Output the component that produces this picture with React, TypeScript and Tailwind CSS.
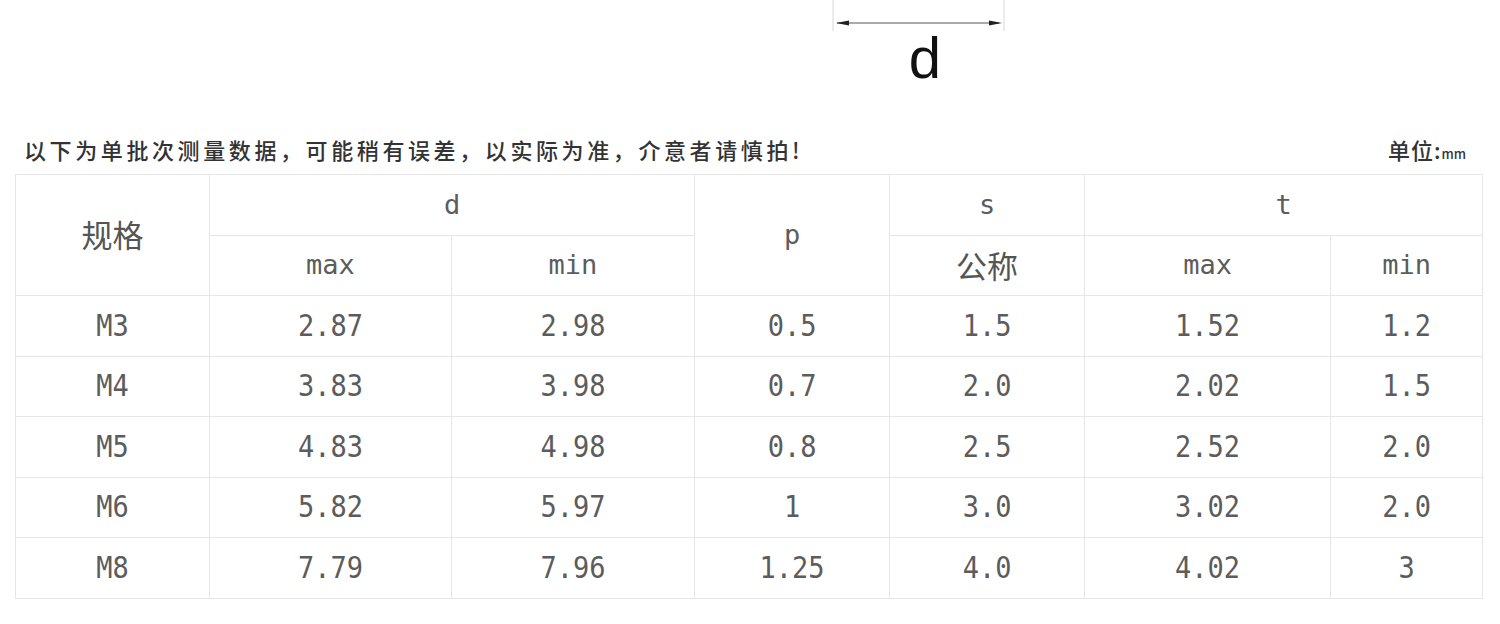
const rows = [
  ["M3", "2.87", "2.98", "0.5", "1.5", "1.52", "1.2"],
  ["M4", "3.83", "3.98", "0.7", "2.0", "2.02", "1.5"],
  ["M5", "4.83", "4.98", "0.8", "2.5", "2.52", "2.0"],
  ["M6", "5.82", "5.97", "1", "3.0", "3.02", "2.0"],
  ["M8", "7.79", "7.96", "1.25", "4.0", "4.02", "3"],
]

const mono = "font-['DejaVu_Sans_Mono',monospace] text-[27px] text-[#5c5c5c]"
const cjk = "font-['Noto_Sans_CJK_SC',sans-serif]"
const cell = "border border-[#e6e6e6] text-center align-middle p-0"

function Val({ v }: { v: string }) {
  return <span className="inline-block scale-y-[1.12]">{v}</span>
}

export default function App() {
  return (
    <div className="w-[1500px] h-[624px] bg-white overflow-hidden text-[#555]">
      {/* dimension drawing */}
      <div className="ml-[831px] w-[176px] flex flex-col items-center">
        <svg width="176" height="32" viewBox="0 0 176 32">
          <line x1="2" y1="0" x2="2" y2="31" stroke="#d8d8d8" strokeWidth="1" />
          <line x1="173" y1="0" x2="173" y2="31" stroke="#d8d8d8" strokeWidth="1" />
          <line x1="6" y1="23" x2="168" y2="23" stroke="#555" strokeWidth="1" />
          <path d="M5 23 L18 20.5 L18 25.5 Z" fill="#222" />
          <path d="M171 23 L158 20.5 L158 25.5 Z" fill="#222" />
        </svg>
        <div className="ml-[12px] -mt-[4px] font-['Liberation_Sans',sans-serif] text-[58px] leading-[60px] text-[#111]">d</div>
      </div>

      {/* note line */}
      <div className={`mt-[46px] flex items-center justify-between pl-[24px] pr-[34px] h-[30px] ${cjk} font-medium text-[#333]`}>
        <span className="text-[22px] tracking-[3.6px]">以下为单批次测量数据，可能稍有误差，以实际为准，介意者请慎拍!</span>
        <span className="text-[22px] tracking-[1px]">
          单位:<span className="text-[13px] tracking-normal">mm</span>
        </span>
      </div>

      <table className="ml-[15px] mt-[10px] w-[1467px] border-collapse table-fixed">
        <colgroup>
          <col className="w-[194px]" />
          <col className="w-[242px]" />
          <col className="w-[243px]" />
          <col className="w-[195px]" />
          <col className="w-[195px]" />
          <col className="w-[246px]" />
          <col className="w-[152px]" />
        </colgroup>
        <tbody>
          <tr className="h-[61px]">
            <td rowSpan={2} className={`${cell} ${cjk} text-[31px] pb-[2px]`}>规格</td>
            <td colSpan={2} className={`${cell} ${mono}`}>d</td>
            <td rowSpan={2} className={`${cell} ${mono}`}>p</td>
            <td className={`${cell} ${mono}`}>s</td>
            <td colSpan={2} className={`${cell} ${mono}`}>t</td>
          </tr>
          <tr className="h-[60px]">
            <td className={`${cell} ${mono}`}>max</td>
            <td className={`${cell} ${mono}`}>min</td>
            <td className={`${cell} ${cjk} text-[31px]`}>公称</td>
            <td className={`${cell} ${mono}`}>max</td>
            <td className={`${cell} ${mono}`}>min</td>
          </tr>
          {rows.map((r, i) => (
            <tr key={r[0]} className={i % 2 === 0 ? "h-[61px]" : "h-[60px]"}>
              {r.map((v, j) => (
                <td key={j} className={`${cell} ${mono}`}><Val v={v} /></td>
              ))}
            </tr>
          ))}
        </tbody>
      </table>
    </div>
  )
}
